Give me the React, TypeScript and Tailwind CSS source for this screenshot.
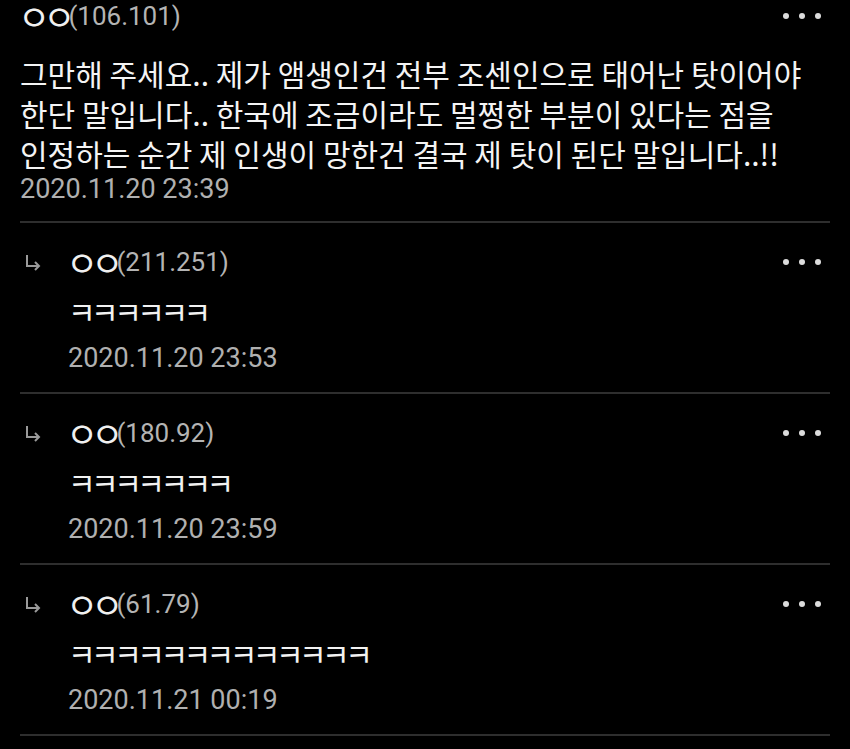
const kr = { fontFamily: '"Noto Sans CJK KR", "Noto Sans", sans-serif' };
const num = { fontFamily: 'Roboto, "Noto Sans CJK KR", sans-serif' };

type Reply = { ip: string; text: string; date: string };

const replies: Reply[] = [
  { ip: "211.251", text: "ㅋㅋㅋㅋㅋㅋ", date: "2020.11.20 23:53" },
  { ip: "180.92", text: "ㅋㅋㅋㅋㅋㅋㅋ", date: "2020.11.20 23:59" },
  { ip: "61.79", text: "ㅋㅋㅋㅋㅋㅋㅋㅋㅋㅋㅋㅋㅋ", date: "2020.11.21 00:19" },
];

const Dots = () => (
  <div className="flex items-center gap-[10px] pr-[29px]">
    <span className="block h-[6px] w-[6px] rounded-full bg-[#dcdcdc]" />
    <span className="block h-[6px] w-[6px] rounded-full bg-[#dcdcdc]" />
    <span className="block h-[6px] w-[6px] rounded-full bg-[#dcdcdc]" />
  </div>
);

const Name = ({ ip }: { ip: string }) => (
  <div className="flex h-[32px] items-center leading-[32px]">
    <span style={kr} className="text-[35px] tracking-[-7px] text-[#f0f0f0]">ㅇㅇ</span>
    <span style={num} className="text-[26px] text-[#b4b4b4]">({ip})</span>
  </div>
);

const Divider = () => <div className="ml-[20px] mr-[20px] h-[2px] bg-[#2e2e2e]" />;

const ReplyArrow = () => (
  <svg width="18" height="20" viewBox="0 0 18 20" className="mt-[2px]">
    <path d="M3 2 V13 H15" stroke="#9a9a9a" strokeWidth="2" fill="none" />
    <path d="M11 9 L15 13 L11 17" stroke="#9a9a9a" strokeWidth="2" fill="none" />
  </svg>
);

const ReplyItem = ({ r }: { r: Reply }) => (
  <div>
    <div className="pt-[23px] pb-[18px]">
      <div className="flex items-center justify-between">
        <div className="flex items-center">
          <div className="flex w-[66px] pl-[24px]">
            <ReplyArrow />
          </div>
          <Name ip={r.ip} />
        </div>
        <Dots />
      </div>
      <div className="pl-[68px]">
        <div style={kr} className="mt-[13px] h-[40px] text-[30px] leading-[40px] tracking-[-4.5px] text-[#f2f2f2]">
          {r.text}
        </div>
        <div style={num} className="mt-[11px] h-[32px] text-[27px] leading-[32px] text-[#b0b0b0]">
          {r.date}
        </div>
      </div>
    </div>
    <Divider />
  </div>
);

export default function App() {
  return (
    <div className="h-[749px] w-[850px] overflow-hidden bg-black">
      <div className="pb-[16px]">
        <div className="flex items-center justify-between pl-[18px]">
          <Name ip="106.101" />
          <Dots />
        </div>
        <div style={kr} className="mt-[21px] pl-[20px] pr-[10px] text-[30px] leading-[40px] text-[#f4f4f4]">
          <div className="whitespace-nowrap">그만해 주세요.. 제가 앰생인건 전부 조센인으로 태어난 탓이어야</div>
          <div className="whitespace-nowrap">한단 말입니다.. 한국에 조금이라도 멀쩡한 부분이 있다는 점을</div>
          <div className="whitespace-nowrap">인정하는 순간 제 인생이 망한건 결국 제 탓이 된단 말입니다..!!</div>
        </div>
        <div style={num} className="h-[32px] pl-[20px] text-[27px] leading-[32px] text-[#b0b0b0]">
          2020.11.20 23:39
        </div>
      </div>
      <Divider />
      {replies.map((r) => (
        <ReplyItem key={r.ip} r={r} />
      ))}
    </div>
  );
}
